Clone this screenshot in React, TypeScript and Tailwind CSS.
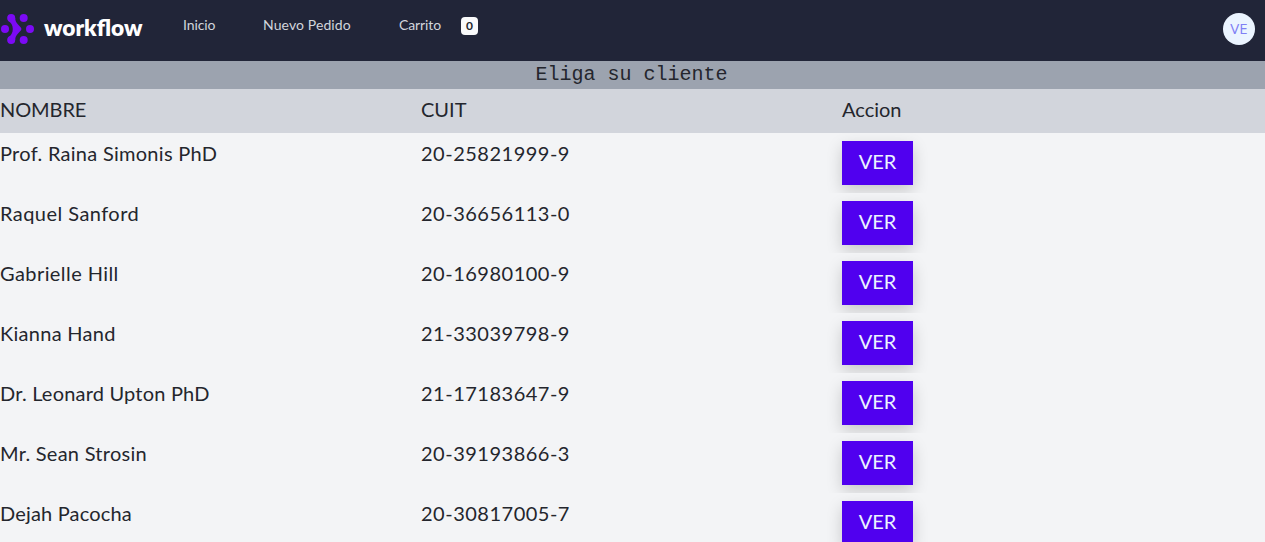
const clients = [
  { name: "Prof. Raina Simonis PhD", cuit: "20-25821999-9", tracking: "tracking-[0.28px]" },
  { name: "Raquel Sanford", cuit: "20-36656113-0", tracking: "tracking-[0.45px]" },
  { name: "Gabrielle Hill", cuit: "20-16980100-9", tracking: "tracking-[0.42px]" },
  { name: "Kianna Hand", cuit: "21-33039798-9", tracking: "tracking-[0.28px]" },
  { name: "Dr. Leonard Upton PhD", cuit: "21-17183647-9", tracking: "tracking-[0.2px]" },
  { name: "Mr. Sean Strosin", cuit: "20-39193866-3", tracking: "tracking-[0.26px]" },
  { name: "Dejah Pacocha", cuit: "20-30817005-7", tracking: "tracking-[0.17px]" },
];

function Logo() {
  return (
    <svg width="144" height="32" viewBox="0 0 144 32" className="shrink-0" aria-label="workflow">
      <g fill="#7c0af5">
        <circle cx="5" cy="16" r="4" />
        <circle cx="11.2" cy="5" r="4" />
        <circle cx="23.7" cy="5" r="4" />
        <circle cx="30" cy="16" r="4" />
        <circle cx="11.2" cy="27" r="4" />
        <circle cx="23.7" cy="27" r="4" />
        <path d="M15.2 5C15.3 8 16.2 9.3 17.6 10.9L20.8 14.4Q22.2 16 20.8 17.6L17.6 21.1C16.2 22.7 15.3 24 15.2 27L8 24.6C11 22.5 12.8 20 12.8 16S11 9.5 8 7.4Z" />
      </g>
      <text x="44" y="23.3" fill="#fff" fontFamily="Lato, sans-serif" fontSize="23" fontWeight="800" textLength="98.5" lengthAdjust="spacingAndGlyphs">
        workflow
      </text>
    </svg>
  );
}

export default function App() {
  return (
    <div className="h-[542px] overflow-hidden bg-[#f3f4f6] font-['Lato',sans-serif] text-[#24262d]">
      <nav className="flex h-[61px] items-start bg-[#212538] text-sm text-[#d2d5dc]">
        <div className="mt-[13px] w-[183px]"><Logo /></div>
        <a className="mt-[15px] w-20 tracking-[-0.1px]">Inicio</a>
        <a className="mt-[15px] w-[136px] tracking-[0.1px]">Nuevo Pedido</a>
        <a className="mt-[15px] w-[62px] tracking-[-0.1px]">Carrito</a>
        <span className="mt-[17px] flex h-[18px] w-[17px] items-center justify-center rounded bg-[#f9fafb] text-xs font-bold text-[#24262d]">0</span>
        <span className="mt-[13px] mr-[10px] ml-auto flex size-8 items-center justify-center rounded-full bg-[#ebf4ff] font-['Open_Sans',sans-serif] text-[15px] text-[#7f7ff5]">VE</span>
      </nav>
      <h1 className="h-7 bg-[#9ca3af] pr-0.5 text-center font-['Liberation_Mono',monospace] text-xl">Eliga su cliente</h1>
      <div className="grid h-11 grid-cols-[421px_421px_1fr] bg-[#d2d5dc] pt-1.5 text-xl">
        <div className="tracking-[-0.1px]">NOMBRE</div>
        <div>CUIT</div>
        <div>Accion</div>
      </div>
      {clients.map((c) => (
        <div key={c.name} className="grid h-[60px] grid-cols-[421px_421px_1fr] overflow-hidden pt-1.5 text-xl">
          <div><span className={c.tracking}>{c.name}</span></div>
          <div><span className="tracking-[0.5px]">{c.cuit}</span></div>
          <div className="pt-0.5">
            <button className="block h-11 w-[71px] bg-[#5000ef] pb-1 text-[#ebf4ff] shadow-[0_6px_16px_rgba(0,0,0,0.18)]">VER</button>
          </div>
        </div>
      ))}
    </div>
  );
}
